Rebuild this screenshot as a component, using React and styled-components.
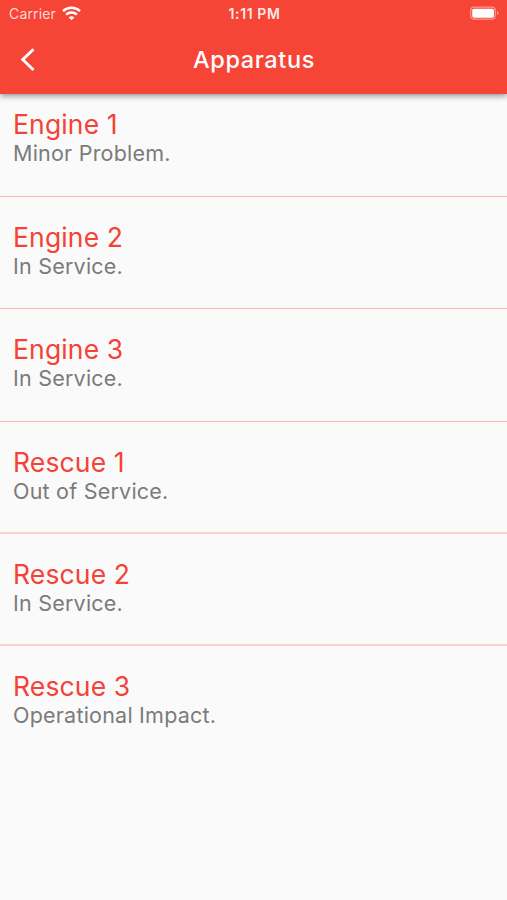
import React from "react";
import styled, { createGlobalStyle } from "styled-components";

const GlobalStyle = createGlobalStyle`
  * { box-sizing: border-box; }
  body { margin: 0; background: #fafafa; font-family: Inter, "Liberation Sans", sans-serif; }
`;

const Screen = styled.div`
  display: flex;
  flex-direction: column;
  width: 507px;
  height: 900px;
  overflow: hidden;
  background: #fafafa;
`;

const Header = styled.header`
  flex: none;
  height: 94px;
  z-index: 1;
  color: #fff;
  background: #f64436;
  box-shadow: 0 2px 6px rgba(0, 0, 0, 0.42);
`;

const StatusBar = styled.div`
  display: grid;
  grid-template-columns: 1fr auto 1fr;
  align-items: center;
  height: 27px;
  padding: 0 7px 0 9px;
`;

const Carrier = styled.div`
  display: flex;
  align-items: center;
  gap: 6px;
  font-size: 14px;
  letter-spacing: 0.15px;
  color: #ffd9d5;
`;

const Clock = styled.div`
  font-size: 14px;
  font-weight: 600;
  letter-spacing: 0.6px;
  color: #ffe9e6;
`;

const BatterySlot = styled.div`
  display: flex;
  justify-content: flex-end;
`;

const NavBar = styled.nav`
  display: grid;
  grid-template-columns: 56px 1fr 56px;
  align-items: center;
  height: 66px;
`;

const BackButton = styled.button`
  display: flex;
  width: 56px;
  height: 56px;
  padding: 15px 0 0 19px;
  border: 0;
  color: inherit;
  background: none;
`;

const Title = styled.h1`
  margin: 0;
  padding-left: 1px;
  text-align: center;
  font-size: 23.5px;
  line-height: 28px;
  padding-bottom: 1px;
  font-weight: 500;
  letter-spacing: 0.6px;
`;

const List = styled.ul`
  margin: 0;
  padding: 0;
  list-style: none;
`;

const Row = styled.li`
  height: 112.4px;
  padding: 24px 13px 0;
  border-bottom: ${(p) => (p.$last ? "0" : "1px solid #fbb6b0")};

  &:first-child {
    height: 102.8px;
    padding-top: 14px;
  }

  &:nth-child(n + 4):not(:last-child) {
    border-bottom: 2px solid #fbd3ce;
  }
`;

const Name = styled.div`
  font-size: 26.5px;
  line-height: 32px;
  letter-spacing: 0.15px;
  color: #f44336;
`;

const Status = styled.div`
  margin-top: 0.1px;
  font-size: 21.5px;
  line-height: 26px;
  letter-spacing: 0.22px;
  color: #7b7b7b;
`;

const WifiIcon = () => (
  <svg width="19" height="15" viewBox="0 0 19 15" fill="none" stroke="#fff" strokeWidth="2.5">
    <path d="M1 5.1C5.7.7 13.3.7 18 5.1" />
    <path d="M4.1 8.6c3-2.8 7.8-2.8 10.8 0" />
    <path d="M9.5 14.3 6.7 11.4c1.6-1.5 4-1.5 5.6 0Z" fill="#fff" stroke="none" />
  </svg>
);

const BatteryIcon = () => (
  <svg width="31" height="15" viewBox="0 0 31 15">
    <rect x="1.7" y="1.2" width="24.6" height="12" rx="3.4" fill="none" stroke="#fb9a92" strokeWidth="1.2" />
    <rect x="3.2" y="2.8" width="21.8" height="8.9" rx="1.8" fill="#fff" />
    <path d="M28 5.1c2 .7 2 3.5 0 4.2Z" fill="#fb9a92" />
  </svg>
);

const BackIcon = () => (
  <svg width="18" height="26" viewBox="0 0 18 26" fill="none" stroke="#fff" strokeWidth="2.9">
    <path d="M14.5 2.2 3.7 12.6l10.8 10.4" />
  </svg>
);

const apparatus = [
  ["Engine 1", "Minor Problem."],
  ["Engine 2", "In Service."],
  ["Engine 3", "In Service."],
  ["Rescue 1", "Out of Service."],
  ["Rescue 2", "In Service."],
  ["Rescue 3", "Operational Impact."],
];

export default function App() {
  return (
    <Screen>
      <GlobalStyle />
      <Header>
        <StatusBar>
          <Carrier>
            Carrier
            <WifiIcon />
          </Carrier>
          <Clock>1:11 PM</Clock>
          <BatterySlot>
            <BatteryIcon />
          </BatterySlot>
        </StatusBar>
        <NavBar>
          <BackButton aria-label="Back">
            <BackIcon />
          </BackButton>
          <Title>Apparatus</Title>
        </NavBar>
      </Header>
      <List>
        {apparatus.map(([name, status], i) => (
          <Row key={name} $last={i === apparatus.length - 1}>
            <Name>{name}</Name>
            <Status>{status}</Status>
          </Row>
        ))}
      </List>
    </Screen>
  );
}
